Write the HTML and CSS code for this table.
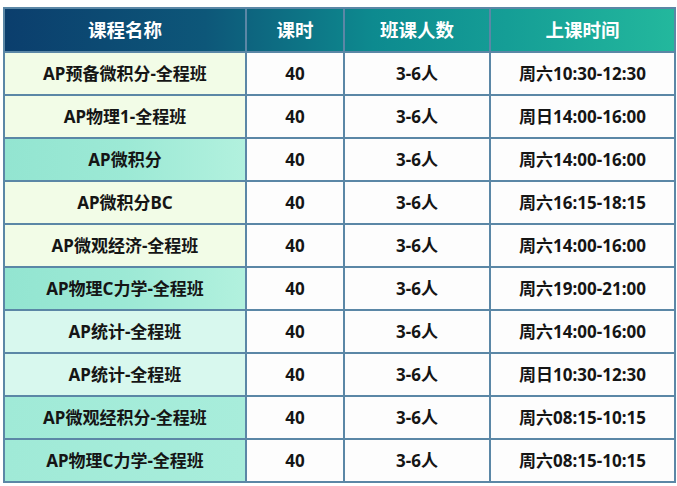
FILE: index.html
```html
<!DOCTYPE html>
<html lang="zh">
<head>
<meta charset="utf-8">
<link rel="stylesheet" href="styles.css">
</head>
<body>
<div class="wrap">
<table class="sched">
  <colgroup>
    <col class="c1"><col class="c2"><col class="c3"><col class="c4">
  </colgroup>
  <thead>
    <tr><th>课程名称</th><th>课时</th><th>班课人数</th><th>上课时间</th></tr>
  </thead>
  <tbody>
    <tr><td class="n g">AP预备微积分-全程班</td><td>40</td><td>3-6人</td><td>周六10:30-12:30</td></tr>
    <tr><td class="n g">AP物理1-全程班</td><td>40</td><td>3-6人</td><td>周日14:00-16:00</td></tr>
    <tr><td class="n t">AP微积分</td><td>40</td><td>3-6人</td><td>周六14:00-16:00</td></tr>
    <tr><td class="n g">AP微积分BC</td><td>40</td><td>3-6人</td><td>周六16:15-18:15</td></tr>
    <tr><td class="n g">AP微观经济-全程班</td><td>40</td><td>3-6人</td><td>周六14:00-16:00</td></tr>
    <tr><td class="n t">AP物理C力学-全程班</td><td>40</td><td>3-6人</td><td>周六19:00-21:00</td></tr>
    <tr><td class="n c">AP统计-全程班</td><td>40</td><td>3-6人</td><td>周六14:00-16:00</td></tr>
    <tr><td class="n c">AP统计-全程班</td><td>40</td><td>3-6人</td><td>周日10:30-12:30</td></tr>
    <tr><td class="n m">AP微观经积分-全程班</td><td>40</td><td>3-6人</td><td>周六08:15-10:15</td></tr>
    <tr><td class="n m">AP物理C力学-全程班</td><td>40</td><td>3-6人</td><td>周六08:15-10:15</td></tr>
  </tbody>
</table>
</div>
</body>
</html>
```
FILE: styles.css
```css
html, body {
  margin: 0;
  padding: 0;
  background: #ffffff;
}
body {
  font-family: "Noto Sans", "Noto Sans CJK SC", sans-serif;
  color: #151515;
}
.wrap {
  padding: 7px 0 0 3px;
}
.sched {
  border-collapse: collapse;
  table-layout: fixed;
  width: 671px;
}
.c1 { width: 242px; }
.c2 { width: 98px; }
.c3 { width: 146px; }
.c4 { width: 185px; }
.sched th, .sched td {
  border: 2px solid #5b87a6;
  text-align: center;
  font-weight: 700;
  padding: 0;
  white-space: nowrap;
  line-height: 1;
}
.sched thead tr {
  background: linear-gradient(90deg, #0b3e6d 0%, #0d5779 30%, #0d8a8f 55%, #159e96 75%, #23b89d 100%);
}
.sched th {
  height: 42px;
  color: #ffffff;
  font-size: 18.5px;
}
.sched td {
  height: 41px;
  font-size: 17px;
  background: #fdfdfd;
}
.sched td.g { background: #f2fce7; }
.sched td.t { background: linear-gradient(90deg, #93e5d1 0%, #9ce9d5 50%, #b2f1de 100%); }
.sched td.c { background: #d8f8ee; }
.sched td.m { background: linear-gradient(90deg, #a0ead7 0%, #a8eddb 100%); }
```
